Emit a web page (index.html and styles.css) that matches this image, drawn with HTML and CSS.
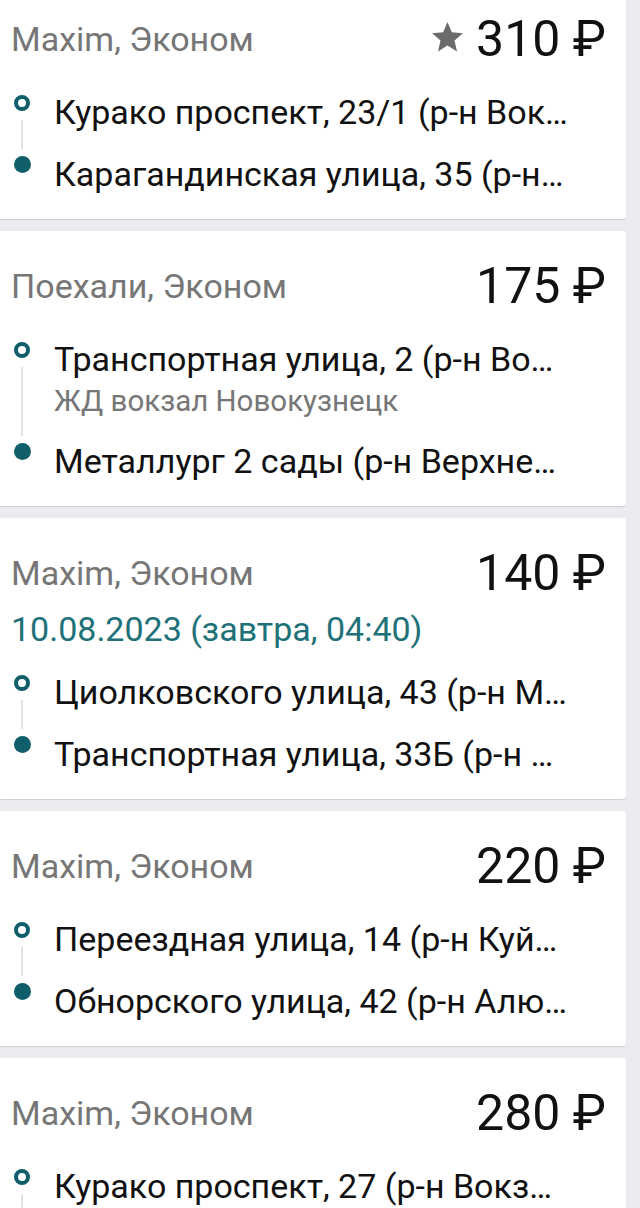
FILE: index.html
```html
<!DOCTYPE html>
<html lang="ru">
<head>
  <meta charset="UTF-8">
  <meta name="viewport" content="width=device-width, initial-scale=1.0">
  <title>Заказы</title>
  <link rel="stylesheet" href="styles.css">
</head>
<body>
  <div class="order-list">

    <div class="order">
      <div class="order-head">
        <span class="order-title">Maxim, Эконом</span>
        <span class="order-price">
          <svg class="star" viewBox="0 0 24 24"><path d="M12 17.27L18.18 21l-1.64-7.03L22 9.24l-7.19-.61L12 2 9.19 8.63 2 9.24l5.46 4.73L5.82 21z"/></svg>
          310 ₽
        </span>
      </div>
      <div class="route">
        <div class="stop">
          <div class="stop-mark"><span class="ring"></span><span class="link"></span></div>
          <div class="stop-text"><div class="addr">Курако проспект, 23/1 (р-н Вок…</div></div>
        </div>
        <div class="stop">
          <div class="stop-mark"><span class="dot"></span></div>
          <div class="stop-text"><div class="addr">Карагандинская улица, 35 (р-н…</div></div>
        </div>
      </div>
    </div>

    <div class="order">
      <div class="order-head">
        <span class="order-title">Поехали, Эконом</span>
        <span class="order-price">175 ₽</span>
      </div>
      <div class="route">
        <div class="stop">
          <div class="stop-mark"><span class="ring"></span><span class="link"></span></div>
          <div class="stop-text">
            <div class="addr">Транспортная улица, 2 (р-н Во…</div>
            <div class="addr-note">ЖД вокзал Новокузнецк</div>
          </div>
        </div>
        <div class="stop">
          <div class="stop-mark"><span class="dot"></span></div>
          <div class="stop-text"><div class="addr">Металлург 2 сады (р-н Верхне…</div></div>
        </div>
      </div>
    </div>

    <div class="order">
      <div class="order-head">
        <span class="order-title">Maxim, Эконом</span>
        <span class="order-price">140 ₽</span>
      </div>
      <div class="order-date">10.08.2023 (завтра, 04:40)</div>
      <div class="route">
        <div class="stop">
          <div class="stop-mark"><span class="ring"></span><span class="link"></span></div>
          <div class="stop-text"><div class="addr">Циолковского улица, 43 (р-н М…</div></div>
        </div>
        <div class="stop">
          <div class="stop-mark"><span class="dot"></span></div>
          <div class="stop-text"><div class="addr">Транспортная улица, 33Б (р-н …</div></div>
        </div>
      </div>
    </div>

    <div class="order">
      <div class="order-head">
        <span class="order-title">Maxim, Эконом</span>
        <span class="order-price">220 ₽</span>
      </div>
      <div class="route">
        <div class="stop">
          <div class="stop-mark"><span class="ring"></span><span class="link"></span></div>
          <div class="stop-text"><div class="addr">Переездная улица, 14 (р-н Куй…</div></div>
        </div>
        <div class="stop">
          <div class="stop-mark"><span class="dot"></span></div>
          <div class="stop-text"><div class="addr">Обнорского улица, 42 (р-н Алю…</div></div>
        </div>
      </div>
    </div>

    <div class="order">
      <div class="order-head">
        <span class="order-title">Maxim, Эконом</span>
        <span class="order-price">280 ₽</span>
      </div>
      <div class="route">
        <div class="stop">
          <div class="stop-mark"><span class="ring"></span><span class="link"></span></div>
          <div class="stop-text"><div class="addr">Курако проспект, 27 (р-н Вокз…</div></div>
        </div>
        <div class="stop">
          <div class="stop-mark"><span class="dot"></span></div>
          <div class="stop-text"><div class="addr">&nbsp;</div></div>
        </div>
      </div>
    </div>

  </div>
</body>
</html>
```

FILE: styles.css
```css
body {
  margin: 0;
  padding: 0;
  background: #eaecef;
  font-family: Roboto, 'Noto Sans', sans-serif;
  color: #111111;
  overflow: hidden;
}

/* list is scrolled a little, first card is cut at the top */
.order-list {
  display: flex;
  flex-direction: column;
  gap: 12px;
  margin-top: -16px;
  padding-right: 14px;
}

.order {
  background: #ffffff;
  border-radius: 0 3px 3px 0;
  box-shadow: 0 1px 1px rgba(0, 0, 0, 0.13);
  padding: 25px 20px 25px 11px;
}

.order-head {
  display: flex;
  justify-content: space-between;
  align-items: center;
  height: 60px;
}

.order-title {
  font-size: 34px;
  line-height: 44px;
  color: #767676;
}

.order-price {
  display: flex;
  align-items: center;
  gap: 10px;
  font-size: 50px;
  line-height: 60px;
  color: #111111;
}

.star {
  width: 37px;
  height: 37px;
  fill: #6b6b6b;
  margin-top: -4px;
}

.order-date {
  margin-top: 6px;
  font-size: 34px;
  line-height: 40px;
  color: #1e7178;
}

.route {
  margin-top: 23px;
}

.stop {
  display: flex;
}

.stop-mark {
  display: flex;
  flex-direction: column;
  align-items: center;
  width: 22px;
  padding-top: 3px;
  flex-shrink: 0;
}

.ring {
  width: 16px;
  height: 16px;
  box-sizing: border-box;
  border: 4.5px solid #115e6b;
  border-radius: 50%;
}

.dot {
  width: 17px;
  height: 17px;
  margin-top: -1px;
  border-radius: 50%;
  background: #115e6b;
}

.link {
  flex: 1;
  width: 2px;
  margin: 9px 0 5px;
  background: #e2e2e2;
}

.stop-text {
  margin-left: 21px;
  min-width: 0;
  padding-bottom: 22px;
}

.stop:last-child .stop-text {
  padding-bottom: 0;
}

.addr {
  font-size: 34px;
  line-height: 40px;
  white-space: nowrap;
  overflow: hidden;
  color: #111111;
}

.addr-note {
  margin-top: 5px;
  font-size: 29.5px;
  line-height: 35px;
  color: #767676;
  white-space: nowrap;
}
```
